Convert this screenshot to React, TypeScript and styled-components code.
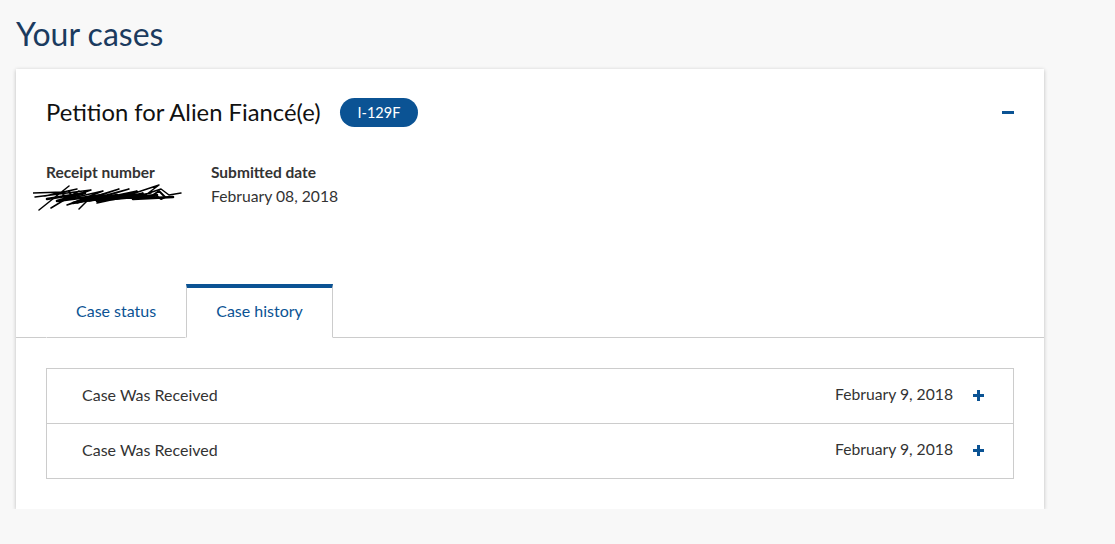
import * as React from "react";
import styled, {createGlobalStyle} from "styled-components";

const GlobalStyle = createGlobalStyle`
    body {
        margin: 0;
        background: #f8f8f8;
        font-family: "Lato", "Open Sans", sans-serif;
        color: #333;
    }
`;

const Side = styled.main`
    width: 1028px;
    padding: 14px 0 0 16px;
`;

const Overskrift = styled.h1`
    margin: 0 0 15px;
    font-size: 32px;
    font-weight: 400;
    line-height: 40px;
    color: #1b3b5f;
`;

const Kort = styled.section`
    background: #fff;
    box-shadow: 0 1px 4px rgba(0, 0, 0, 0.24);
    padding-bottom: 30px;
`;

const Hode = styled.div`
    display: flex;
    align-items: center;
    padding: 28px 30px 0;
    height: 30px;
`;

const Tittel = styled.h2`
    margin: 0;
    font-size: 23.8px;
    font-weight: 400;
    color: #111;
`;

const Merke = styled.span`
    margin-left: 19px;
    height: 29px;
    padding: 0 18px;
    border-radius: 15px;
    background: #0b5394;
    color: #fff;
    font-size: 14.5px;
    display: flex;
    align-items: center;
`;

const Lukk = styled.button`
    margin-left: auto;
    width: 12px;
    height: 3px;
    padding: 0;
    border: 0;
    background: #0b5394;
`;

const Detaljer = styled.div`
    display: flex;
    padding: 36px 30px 0;
    height: 80px;
`;

const Felt = styled.div<{$bredde?: number}>`
    display: flex;
    flex-direction: column;
    width: ${({$bredde}) => ($bredde ? `${$bredde}px` : "auto")};
`;

const Etikett = styled.span`
    font-size: 15.5px;
    font-weight: 700;
    color: #333;
    line-height: 18px;
`;

const Verdi = styled.span`
    font-size: 15.7px;
    color: #333;
    line-height: 22px;
    margin-top: 4px;
`;

const Faner = styled.div`
    display: flex;
    padding: 41px 30px 0;
    border-bottom: 1px solid #ccc;
`;

const Fane = styled.button<{$aktiv?: boolean}>`
    font-family: inherit;
    font-size: 16px;
    color: #0b5394;
    background: #fff;
    height: 54px;
    padding: 0 29px 5px;
    margin-bottom: -1px;
    border: 1px solid ${({$aktiv}) => ($aktiv ? "#ccc" : "transparent")};
    border-top: 4px solid ${({$aktiv}) => ($aktiv ? "#0b5394" : "transparent")};
    border-bottom: 1px solid ${({$aktiv}) => ($aktiv ? "#fff" : "#ccc")};
`;

const Historikk = styled.ul`
    list-style: none;
    margin: 30px 30px 0;
    padding: 0;
    border: 1px solid #ccc;
`;

const Rad = styled.li`
    display: flex;
    align-items: center;
    height: 54px;
    box-sizing: border-box;
    padding: 0 29px 4px 35px;
    font-size: 16px;
    color: #333;
    & + & {
        border-top: 1px solid #ccc;
        height: 55px;
    }
`;

const Dato = styled.span`
    margin-left: auto;
    margin-right: 20px;
    font-size: 15.7px;
`;

const Pluss = styled.svg`
    margin-top: 3px;
`;

const PlussIkon = () => (
    <Pluss width="11" height="11" viewBox="0 0 11 11">
        <rect x="4" y="0" width="3" height="11" fill="#0b5394" />
        <rect x="0" y="4" width="11" height="3" fill="#0b5394" />
    </Pluss>
);

const Kruseduller = styled.svg`
    margin: 2px 0 0 -13px;
`;

const Strek = () => (
    <Kruseduller width="150" height="30" viewBox="0 0 150 30" fill="none" stroke="#000" strokeLinecap="round" strokeLinejoin="round">
        <path
            strokeWidth="1.5"
            d="M0 10 L30 9 L12 13 L44 6 M6 27 L36 3 M18 25 L46 8 M2 14 L58 7 L26 18 L70 8 L34 22 L86 6 L44 20 L96 6 L56 18 L104 8 L64 20 L110 10 L72 18 L118 10 M96 12 L126 2 L110 14 M116 10 L128 6 L136 12 L148 10 M46 26 L60 12"
        />
        <path
            strokeWidth="2.6"
            d="M14 16 L52 10 L24 18 L70 12 L40 20 L84 12 L52 18 L96 12 L64 18 L108 12 L80 16 L124 12 L100 16 L140 14"
        />
        <path strokeWidth="2" d="M120 12 L126 8 L132 14 L128 16 L122 12 M30 12 L40 16 L36 8" />
    </Kruseduller>
);

const historikk = [
    {tekst: "Case Was Received", dato: "February 9, 2018"},
    {tekst: "Case Was Received", dato: "February 9, 2018"},
];

export const App = () => {
    return (
        <>
            <GlobalStyle />
            <Side>
                <Overskrift>Your cases</Overskrift>
                <Kort>
                    <Hode>
                        <Tittel>Petition for Alien Fiancé(e)</Tittel>
                        <Merke>I-129F</Merke>
                        <Lukk aria-label="Collapse" />
                    </Hode>
                    <Detaljer>
                        <Felt $bredde={165}>
                            <Etikett>Receipt number</Etikett>
                            <Strek />
                        </Felt>
                        <Felt>
                            <Etikett>Submitted date</Etikett>
                            <Verdi>February 08, 2018</Verdi>
                        </Felt>
                    </Detaljer>
                    <Faner>
                        <Fane>Case status</Fane>
                        <Fane $aktiv>Case history</Fane>
                    </Faner>
                    <Historikk>
                        {historikk.map((rad, i) => (
                            <Rad key={i}>
                                {rad.tekst}
                                <Dato>{rad.dato}</Dato>
                                <PlussIkon />
                            </Rad>
                        ))}
                    </Historikk>
                </Kort>
            </Side>
        </>
    );
};

export default App;
